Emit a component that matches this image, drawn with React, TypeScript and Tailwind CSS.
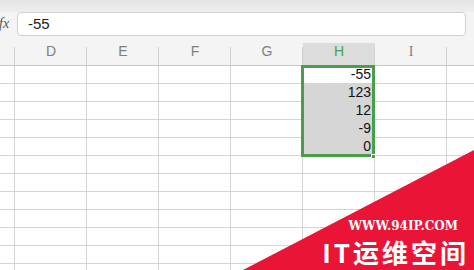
const cols = [
  { key: 'row', label: '', w: 'w-[15px]' },
  { key: 'D', label: 'D', w: 'w-[72px]' },
  { key: 'E', label: 'E', w: 'w-[72px]' },
  { key: 'F', label: 'F', w: 'w-[72px]' },
  { key: 'G', label: 'G', w: 'w-[72px]' },
  { key: 'H', label: 'H', w: 'w-[72px]' },
  { key: 'I', label: 'I', w: 'w-[72px]' },
  { key: 'J', label: '', w: 'w-[28px]' },
];

const hValues = ['-55', '123', '12', '-9', '0'];

export default function App() {
  const rows = Array.from({ length: 12 }, (_, i) => i);
  return (
    <div className="w-[474px] h-[270px] overflow-hidden bg-white relative font-['Liberation_Sans',Arial,sans-serif]">
      <div className="h-[12px] bg-gradient-to-b from-[#e4e4e4] to-[#eeeeee]" />
      <div className="h-[31px] bg-[#f4f4f4] flex items-start">
        <span className="w-[18px] -ml-[1px] h-[23px] flex items-center text-[14px] italic text-[#555] font-['Liberation_Serif',serif]">
          fx
        </span>
        <div className="flex-1 h-[24px] mr-[8px] bg-white border border-[#d0d0d0] rounded-[4px] flex items-center pl-[10px] text-[15px] text-[#222]">
          -55
        </div>
      </div>
      <div className="flex h-[23px] bg-[#f4f4f4] border-b border-[#c8c8c8]">
        {cols.map((c) => (
          <div
            key={c.key}
            className={`${c.w} shrink-0 flex items-end justify-center pb-[3px] text-[14px] ${
              c.key === 'H'
                ? 'bg-[#dcdcdc] text-[#4f9e4f]'
                : 'text-[#808080]'
            } ${c.key === 'J' ? '' : 'relative'}`}
          >
            <span className={c.key === 'I' ? "font-['Liberation_Serif',serif]" : ''}>{c.label}</span>
            {c.key !== 'J' && (
              <span className="absolute right-0 bottom-0 h-[18px] w-px bg-[#cfcfcf]" />
            )}
          </div>
        ))}
      </div>
      <div className="relative">
        {rows.map((r) => (
          <div key={r} className="flex h-[18px] border-b border-[#d4d4d4]">
            {cols.map((c) => {
              const sel = c.key === 'H' && r < 5;
              return (
                <div
                  key={c.key}
                  className={`${c.w} shrink-0 flex items-center justify-end pr-[3px] text-[14px] text-[#111] ${
                    c.key === 'J' ? '' : 'border-r border-[#d4d4d4]'
                  } ${sel && r > 0 ? 'bg-[#d6d6d6]' : ''}`}
                >
                  {sel ? hValues[r] : ''}
                </div>
              );
            })}
          </div>
        ))}
        <div className="absolute left-[301px] top-[-1px] w-[74px] h-[92px] border-[3px] border-[#4a9e4a]" />
        <div className="absolute left-[371px] top-[88px] w-[5px] h-[5px] bg-[#4a9e4a] border border-white" />
      </div>
      <div className="absolute inset-0 bg-[#ea1436] [clip-path:polygon(243px_270px,474px_150px,474px_270px)]" />
      <div className="absolute left-[320px] top-[217px] w-[146px] flex flex-col items-end text-white">
        <span className="text-[12px] font-bold font-['DejaVu_Serif',serif] leading-[18px] mr-[8px]">
          WWW.94IP.COM
        </span>
        <span className="text-[26px] font-bold leading-[34px] tracking-[3px] -mr-[3px] font-['Noto_Sans_CJK_SC',sans-serif] whitespace-nowrap">
          IT运维空间
        </span>
      </div>
    </div>
  );
}
